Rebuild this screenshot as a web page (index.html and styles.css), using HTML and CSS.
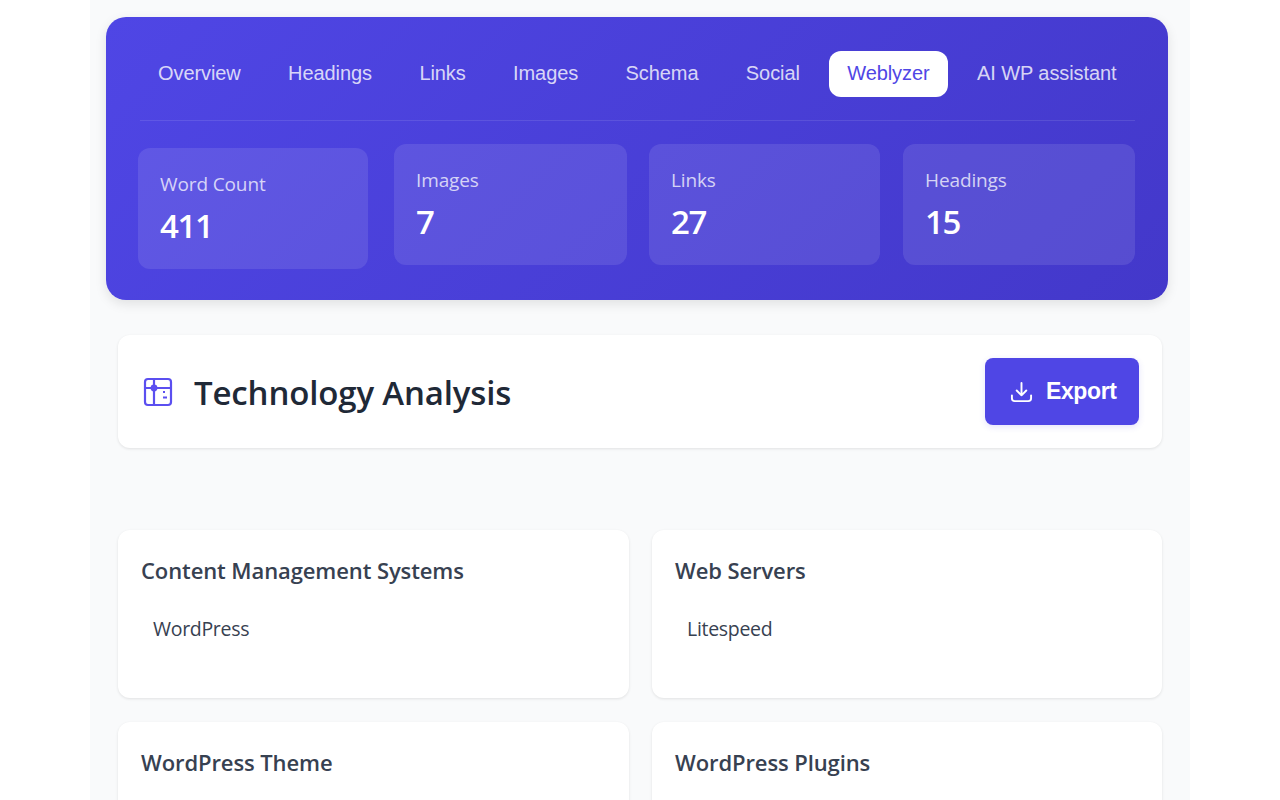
FILE: index.html
```html
<!DOCTYPE html>
<html lang="en">
<head>
    <meta charset="UTF-8">
    <title>Technology Analysis</title>
    <link rel="stylesheet" href="styles.css">
</head>
<body>
    <div class="page">
        <div class="hero">
            <nav class="tabs">
                <a class="tab tab-overview">Overview</a>
                <a class="tab">Headings</a>
                <a class="tab">Links</a>
                <a class="tab">Images</a>
                <a class="tab">Schema</a>
                <a class="tab">Social</a>
                <a class="tab active">Weblyzer</a>
                <a class="tab">AI WP assistant</a>
            </nav>
            <div class="stats">
                <div class="stat stat-first">
                    <div class="stat-label">Word Count</div>
                    <div class="stat-value">411</div>
                </div>
                <div class="stat stat-images">
                    <div class="stat-label">Images</div>
                    <div class="stat-value">7</div>
                </div>
                <div class="stat stat-links">
                    <div class="stat-label">Links</div>
                    <div class="stat-value">27</div>
                </div>
                <div class="stat stat-headings">
                    <div class="stat-label">Headings</div>
                    <div class="stat-value">15</div>
                </div>
            </div>
        </div>

        <div class="content">
            <div class="title-card">
                <div class="title-left">
                    <svg class="title-icon" viewBox="0 0 30 30" fill="none" stroke="currentColor" stroke-width="2.2">
                        <rect x="2" y="2" width="26" height="26" rx="3"/>
                        <path d="M2 11h26M11 2v26"/>
                        <circle cx="11" cy="11" r="3.4" fill="currentColor" stroke="none"/>
                        <path d="M20 15h2M20 20.5h4"/>
                    </svg>
                    <h1>Technology Analysis</h1>
                </div>
                <button class="export">
                    <svg class="export-icon" viewBox="0 0 24 24" fill="none" stroke="currentColor" stroke-width="2" stroke-linecap="round" stroke-linejoin="round">
                        <path d="M12 3v13M7 11l5 5 5-5M2 16v3a3 3 0 0 0 3 3h14a3 3 0 0 0 3-3v-3"/>
                    </svg>
                    Export
                </button>
            </div>

            <div class="tech-grid">
                <div class="tech-card">
                    <h3>Content Management Systems</h3>
                    <div class="tech-item">WordPress</div>
                </div>
                <div class="tech-card">
                    <h3>Web Servers</h3>
                    <div class="tech-item">Litespeed</div>
                </div>
                <div class="tech-card">
                    <h3>WordPress Theme</h3>
                </div>
                <div class="tech-card">
                    <h3>WordPress Plugins</h3>
                </div>
            </div>
        </div>
    </div>
</body>
</html>
```

FILE: styles.css
```css
* {
    margin: 0;
    padding: 0;
    box-sizing: border-box;
}

html, body {
    height: 800px;
    overflow: hidden;
}

body {
    background: #fff;
    font-family: 'Open Sans', 'Noto Sans', sans-serif;
}

.page {
    width: 1100px;
    height: 800px;
    margin: 0 auto;
    padding: 17px 22px 0 16px;
    background: #f9fafb;
    overflow: hidden;
}

.hero {
    height: 283px;
    padding: 34px 33px 0 32px;
    border-radius: 20px;
    background: linear-gradient(135deg, #4f46e5 0%, #4338ca 100%);
    box-shadow: 0 4px 12px rgba(0,0,0,0.1);
}

.tabs {
    display: flex;
    gap: 11.4px;
    height: 70px;
    margin-left: 2px;
    border-bottom: 1px solid rgba(255,255,255,0.1);
}

.tab {
    height: 46px;
    padding: 0 18px;
    border-radius: 12px;
    font-family: 'Liberation Sans', Arial, sans-serif;
    font-size: 20px;
    letter-spacing: -0.08px;
    line-height: 44px;
    color: rgba(255,255,255,0.8);
}

.tab.active {
    background: #fff;
    color: #4f46e5;
}

.stats {
    display: flex;
    margin-top: 23px;
}

.stat {
    height: 121px;
    padding: 22px;
    border-radius: 12px;
    background: rgba(255,255,255,0.1);
}

.stat-first { width: 230px; margin-top: 4px; margin-right: 26px; }
.stat-images { width: 233px; margin-right: 22px; }
.stat-links { width: 231px; margin-right: 23px; }
.stat-headings { width: 232px; }

.stat-label {
    font-size: 19px;
    line-height: 28px;
    letter-spacing: -0.12px;
    color: rgba(255,255,255,0.75);
}

.stat-value {
    margin-top: 7px;
    font-size: 33px;
    font-weight: 600;
    line-height: 42px;
    letter-spacing: -1.4px;
    color: #fff;
}

.content {
    padding: 35px 6px 0 12px;
}

.title-card {
    display: flex;
    justify-content: space-between;
    align-items: center;
    height: 113px;
    padding: 0 23px 0 25px;
    border-radius: 12px;
    background: #fff;
    box-shadow: 0 1px 3px rgba(0,0,0,0.1);
}

.title-left {
    display: flex;
    align-items: center;
    gap: 21px;
}

.title-icon {
    width: 30px;
    height: 30px;
    color: #5b4ff0;
}

h1 {
    margin-top: 2px;
    font-size: 33px;
    font-weight: 600;
    letter-spacing: -0.15px;
    color: #1f2937;
}

.export {
    display: flex;
    align-items: center;
    gap: 13px;
    width: 154px;
    height: 67px;
    padding-left: 25px;
    border: none;
    border-radius: 8px;
    background: #4f46e5;
    box-shadow: 0 2px 6px rgba(79,70,229,0.15);
    font-family: 'Liberation Sans', Arial, sans-serif;
    font-size: 23px;
    font-weight: 700;
    letter-spacing: -0.4px;
    color: #fff;
}

.export-icon {
    width: 23px;
    height: 23px;
}

.tech-grid {
    display: grid;
    grid-template-columns: 511px 510px;
    gap: 24px 23px;
    margin-top: 82px;
}

.tech-card {
    height: 168px;
    padding: 23px 23px;
    border-radius: 12px;
    background: #fff;
    box-shadow: 0 1px 3px rgba(0,0,0,0.1);
}

h3 {
    font-size: 22px;
    font-weight: 600;
    line-height: 34px;
    letter-spacing: -0.1px;
    color: #374151;
}

.tech-item {
    margin-top: 26px;
    padding-left: 12px;
    font-size: 19.5px;
    line-height: 32px;
    letter-spacing: -0.3px;
    color: #374151;
}
```
